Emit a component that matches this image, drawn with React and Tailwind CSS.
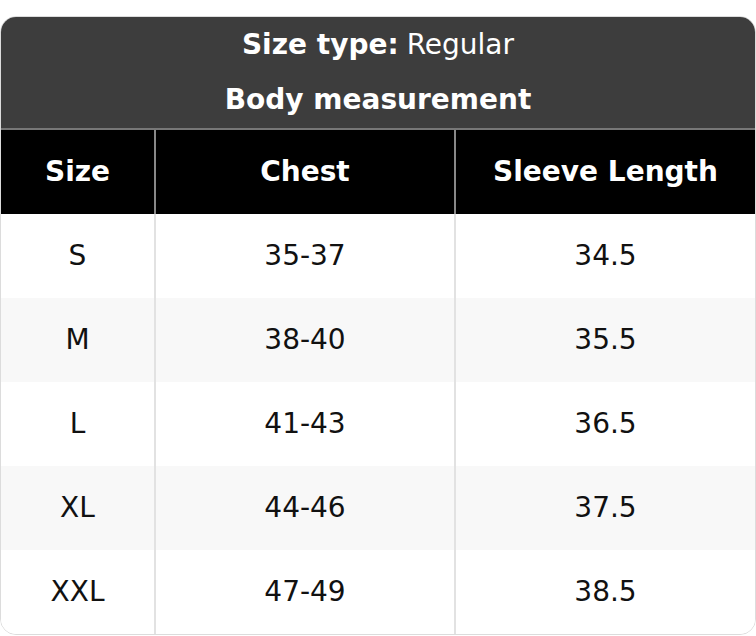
import React from 'react';

const rows = [
    { size: 'S', chest: '35-37', sleeve: '34.5' },
    { size: 'M', chest: '38-40', sleeve: '35.5' },
    { size: 'L', chest: '41-43', sleeve: '36.5' },
    { size: 'XL', chest: '44-46', sleeve: '37.5' },
    { size: 'XXL', chest: '47-49', sleeve: '38.5' },
];

export default function App() {
    return (
        <div
            className="pt-4 bg-white min-h-screen"
            style={{ fontFamily: '"DejaVu Sans", "Liberation Sans", sans-serif' }}
        >
            <div className="rounded-2xl border border-[#dcdcdc] overflow-hidden">
                {/* Title */}
                <div className="bg-[#3d3d3d] text-white text-center text-[28px] border-b-2 border-[#777]">
                    <div className="h-[55px] flex items-center justify-center">
                        <span className="font-bold">Size type:</span>
                        <span className="ml-2">Regular</span>
                    </div>
                    <div className="h-[56px] flex items-center justify-center font-bold">
                        Body measurement
                    </div>
                </div>

                {/* Column headers */}
                <div className="grid grid-cols-[153px_300px_1fr] bg-black text-white font-bold text-[28px] h-[84px]">
                    <div className="flex items-center justify-center">Size</div>
                    <div className="flex items-center justify-center border-l-2 border-[#888]">Chest</div>
                    <div className="flex items-center justify-center border-l-2 border-[#888]">Sleeve Length</div>
                </div>

                {/* Rows */}
                {rows.map((row, i) => (
                    <div
                        key={row.size}
                        className={`grid grid-cols-[153px_300px_1fr] text-[28px] text-[#111] h-[84px] ${i % 2 === 1 ? 'bg-[#f8f8f8]' : 'bg-white'}`}
                    >
                        <div className="flex items-center justify-center">{row.size}</div>
                        <div className="flex items-center justify-center border-l-2 border-[#e2e2e2]">{row.chest}</div>
                        <div className="flex items-center justify-center border-l-2 border-[#e2e2e2]">{row.sleeve}</div>
                    </div>
                ))}
            </div>
        </div>
    );
}
